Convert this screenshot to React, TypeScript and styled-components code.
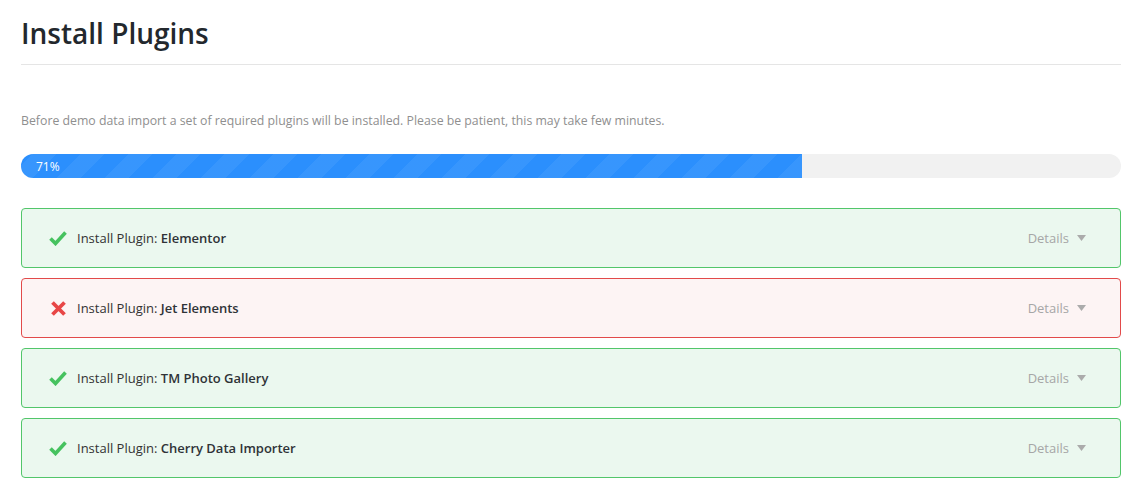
import styled, { createGlobalStyle } from 'styled-components'

const GlobalStyle = createGlobalStyle`
  body {
    margin: 0;
    background: #fff;
    font-family: "Open Sans", "Noto Sans", sans-serif;
  }
`

const Page = styled.div`
  padding: 14px 14px 0 21px;
  width: 1100px;
`

const Title = styled.h1`
  margin: 0;
  padding-bottom: 12px;
  border-bottom: 1px solid #e5e5e5;
  font-size: 28px;
  font-weight: 600;
  line-height: 38px;
  color: #23282d;
`

const Description = styled.p`
  margin: 46px 0 0;
  font-size: 12.3px;
  line-height: 20px;
  color: #8f8f8f;
`

const Track = styled.div`
  margin-top: 23px;
  height: 24px;
  border-radius: 12px;
  background: #f1f1f1;
  overflow: hidden;
`

const Fill = styled.div`
  height: 100%;
  display: flex;
  align-items: center;
  padding-left: 15px;
  box-sizing: border-box;
  background-color: #2b8ffd;
  background-image: repeating-linear-gradient(
    -45deg,
    rgba(255, 255, 255, 0.06) 0 17px,
    transparent 17px 34px
  );
  color: #fff;
  font-size: 12px;
`

const List = styled.div`
  margin-top: 30px;
  display: flex;
  flex-direction: column;
  gap: 10px;
`

const Item = styled.div<{ $failed?: boolean }>`
  height: 60px;
  box-sizing: border-box;
  display: flex;
  align-items: center;
  padding: 0 34px 0 26px;
  border: 1px solid ${(p) => (p.$failed ? '#e24a4a' : '#52c66a')};
  background: ${(p) => (p.$failed ? '#fdf4f4' : '#ebf8ef')};
  border-radius: 4px;
`

const Status = styled.span`
  width: 20px;
  height: 20px;
  display: flex;
  align-items: center;
  justify-content: center;
  margin-right: 9px;
`

const Label = styled.span`
  flex: 1;
  font-size: 13px;
  color: #333;
`

const Name = styled.b`
  font-weight: 600;
  color: #2f3337;
`

const Details = styled.span`
  display: flex;
  align-items: center;
  gap: 8px;
  font-size: 13px;
  color: #a6a6a6;
`

const Check = () => (
  <svg width="18" height="16" viewBox="0 0 18 16">
    <path d="M1.5 8.5 L6.5 13.5 L16.5 2.5" fill="none" stroke="#46c25f" strokeWidth="3.6" strokeLinejoin="miter" />
  </svg>
)

const Cross = () => (
  <svg width="17" height="17" viewBox="0 0 17 17">
    <path d="M2.5 2.5 L14.5 14.5 M14.5 2.5 L2.5 14.5" fill="none" stroke="#e84646" strokeWidth="3.8" />
  </svg>
)

const Caret = () => (
  <svg width="9" height="6" viewBox="0 0 9 6">
    <path d="M0 0 H9 L4.5 6 Z" fill="#ababab" />
  </svg>
)

const plugins = [
  { name: 'Elementor', failed: false },
  { name: 'Jet Elements', failed: true },
  { name: 'TM Photo Gallery', failed: false },
  { name: 'Cherry Data Importer', failed: false },
]

export default function App() {
  const progress = 71
  return (
    <>
      <GlobalStyle />
      <Page>
        <Title>Install Plugins</Title>
        <Description>
          Before demo data import a set of required plugins will be installed. Please be patient, this may take few minutes.
        </Description>
        <Track>
          <Fill style={{ width: `${progress}%` }}>{progress}%</Fill>
        </Track>
        <List>
          {plugins.map((p) => (
            <Item key={p.name} $failed={p.failed}>
              <Status>{p.failed ? <Cross /> : <Check />}</Status>
              <Label>
                Install Plugin: <Name>{p.name}</Name>
              </Label>
              <Details>
                Details <Caret />
              </Details>
            </Item>
          ))}
        </List>
      </Page>
    </>
  )
}
